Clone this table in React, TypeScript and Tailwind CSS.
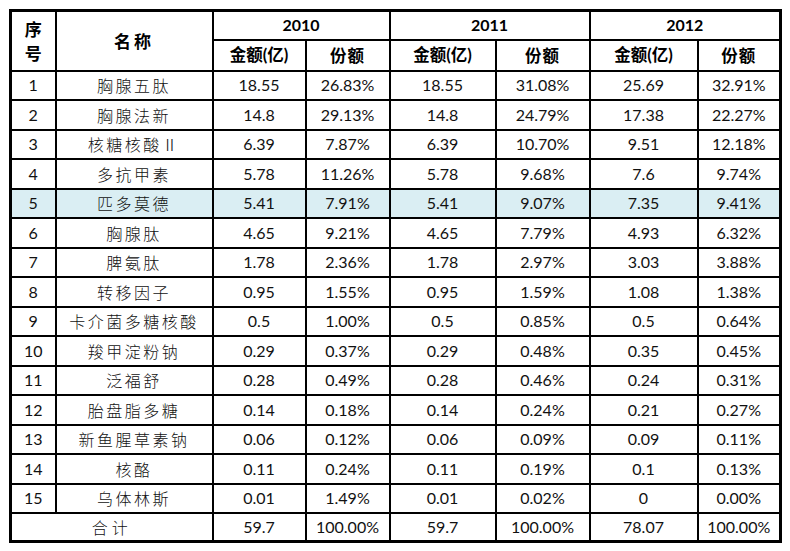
import React from "react";

type Row = [string, string, string, string, string, string, string, string];

const rows: Row[] = [
  ["1", "胸腺五肽", "18.55", "26.83%", "18.55", "31.08%", "25.69", "32.91%"],
  ["2", "胸腺法新", "14.8", "29.13%", "14.8", "24.79%", "17.38", "22.27%"],
  ["3", "核糖核酸Ⅱ", "6.39", "7.87%", "6.39", "10.70%", "9.51", "12.18%"],
  ["4", "多抗甲素", "5.78", "11.26%", "5.78", "9.68%", "7.6", "9.74%"],
  ["5", "匹多莫德", "5.41", "7.91%", "5.41", "9.07%", "7.35", "9.41%"],
  ["6", "胸腺肽", "4.65", "9.21%", "4.65", "7.79%", "4.93", "6.32%"],
  ["7", "脾氨肽", "1.78", "2.36%", "1.78", "2.97%", "3.03", "3.88%"],
  ["8", "转移因子", "0.95", "1.55%", "0.95", "1.59%", "1.08", "1.38%"],
  ["9", "卡介菌多糖核酸", "0.5", "1.00%", "0.5", "0.85%", "0.5", "0.64%"],
  ["10", "羧甲淀粉钠", "0.29", "0.37%", "0.29", "0.48%", "0.35", "0.45%"],
  ["11", "泛福舒", "0.28", "0.49%", "0.28", "0.46%", "0.24", "0.31%"],
  ["12", "胎盘脂多糖", "0.14", "0.18%", "0.14", "0.24%", "0.21", "0.27%"],
  ["13", "新鱼腥草素钠", "0.06", "0.12%", "0.06", "0.09%", "0.09", "0.11%"],
  ["14", "核酪", "0.11", "0.24%", "0.11", "0.19%", "0.1", "0.13%"],
  ["15", "乌体林斯", "0.01", "1.49%", "0.01", "0.02%", "0", "0.00%"],
];

const num = "font-['Lato','Liberation_Sans',sans-serif] text-[16px] text-[#111]";
const cjkName =
  "font-['Noto_Sans_CJK_SC',sans-serif] font-light text-[16px] tracking-[2.5px] text-[#111]";
const headCjk =
  "font-['Noto_Sans_CJK_SC',sans-serif] font-bold text-[16.5px] text-black";
const cell = "border-2 border-black text-center align-middle p-0";

export default function App() {
  return (
    <div className="w-[790px] h-[551px] bg-white pt-[9px] pl-[9px]">
      <table className="table-fixed border-collapse border-[3px] border-black w-[770px]">
        <colgroup>
          <col className="w-[45px]" />
          <col className="w-[157px]" />
          <col className="w-[93px]" />
          <col className="w-[84px]" />
          <col className="w-[106px]" />
          <col className="w-[94px]" />
          <col className="w-[108px]" />
          <col className="w-[83px]" />
        </colgroup>
        <thead>
          <tr className="h-[29px]">
            <td rowSpan={2} className={`${cell} ${headCjk} text-[17px] leading-[24px]`}>
              序<br />号
            </td>
            <td rowSpan={2} className={`${cell} ${headCjk} text-[17px] tracking-[3px]`}>
              名称
            </td>
            <td colSpan={2} className={`${cell} font-['Lato',sans-serif] font-bold text-[16px]`}>
              2010
            </td>
            <td colSpan={2} className={`${cell} font-['Lato',sans-serif] font-bold text-[16px]`}>
              2011
            </td>
            <td colSpan={2} className={`${cell} font-['Lato',sans-serif] font-bold text-[16px]`}>
              2012
            </td>
          </tr>
          <tr className="h-[31px]">
            {[0, 1, 2].map((i) => (
              <React.Fragment key={i}>
                <td className={`${cell} ${headCjk}`}>
                  金额<span className="font-['Lato',sans-serif] font-bold">(</span>亿
                  <span className="font-['Lato',sans-serif] font-bold">)</span>
                </td>
                <td className={`${cell} ${headCjk} tracking-[1px]`}>份额</td>
              </React.Fragment>
            ))}
          </tr>
        </thead>
        <tbody>
          {rows.map((r, idx) => (
            <tr
              key={r[0]}
              className={`h-[29.5px] ${idx === 4 ? "bg-[#daeef3]" : "bg-white"}`}
            >
              <td className={`${cell} ${num}`}>{r[0]}</td>
              <td className={`${cell} ${cjkName}`}>{r[1]}</td>
              {r.slice(2).map((v, j) => (
                <td key={j} className={`${cell} ${num}`}>
                  {v}
                </td>
              ))}
            </tr>
          ))}
          <tr className="h-[28px]">
            <td colSpan={2} className={`${cell} ${cjkName} tracking-[4px]`}>
              合计
            </td>
            <td className={`${cell} ${num}`}>59.7</td>
            <td className={`${cell} ${num}`}>100.00%</td>
            <td className={`${cell} ${num}`}>59.7</td>
            <td className={`${cell} ${num}`}>100.00%</td>
            <td className={`${cell} ${num}`}>78.07</td>
            <td className={`${cell} ${num}`}>100.00%</td>
          </tr>
        </tbody>
      </table>
    </div>
  );
}
